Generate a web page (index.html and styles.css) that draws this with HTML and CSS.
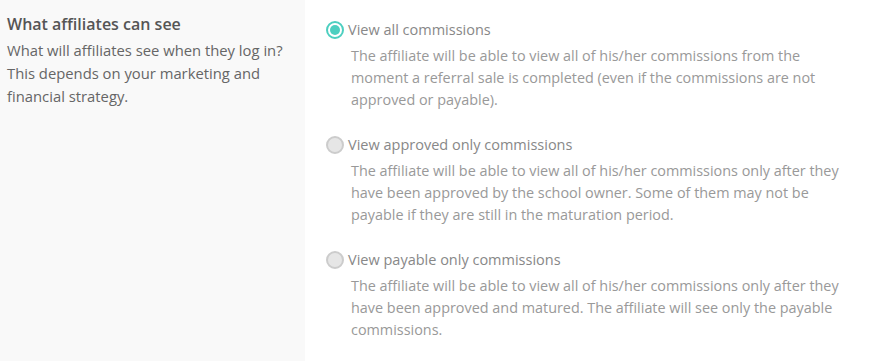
FILE: index.html
```html
<!DOCTYPE html>
<html>
<head>
<meta charset="utf-8">
<link rel="stylesheet" href="styles.css">
</head>
<body>
<div class="page">
  <aside class="side">
    <h2 class="side-title">What affiliates can see</h2>
    <p class="side-desc">What will affiliates see when they log in? This depends on your marketing and financial strategy.</p>
  </aside>
  <main class="options">
    <label class="option">
      <span class="radio checked"></span>
      <span class="option-body">
        <span class="option-label">View all commissions</span>
        <span class="option-desc">The affiliate will be able to view all of his/her commissions from the moment a referral sale is completed (even if the commissions are not approved or payable).</span>
      </span>
    </label>
    <label class="option">
      <span class="radio"></span>
      <span class="option-body">
        <span class="option-label">View approved only commissions</span>
        <span class="option-desc">The affiliate will be able to view all of his/her commissions only after they have been approved by the school owner. Some of them may not be payable if they are still in the maturation period.</span>
      </span>
    </label>
    <label class="option">
      <span class="radio"></span>
      <span class="option-body">
        <span class="option-label">View payable only commissions</span>
        <span class="option-desc">The affiliate will be able to view all of his/her commissions only after they have been approved and matured. The affiliate will see only the payable commissions.</span>
      </span>
    </label>
  </main>
</div>
</body>
</html>
```

FILE: styles.css
```css
html, body {
  margin: 0;
  padding: 0;
  background: #ffffff;
}
body {
  font-family: "Open Sans", "Noto Sans", sans-serif;
  -webkit-font-smoothing: antialiased;
}
.page {
  display: flex;
  width: 875px;
  height: 361px;
  overflow: hidden;
}
.side {
  width: 305px;
  flex: none;
  background: #f9f9f9;
  box-sizing: border-box;
  padding: 12px 7px 0 7px;
}
.side-title {
  margin: 0;
  font-size: 16px;
  font-weight: 600;
  color: #555555;
  line-height: 24px;
}
.side-desc {
  margin: 3px 0 0 0;
  font-size: 14.8px;
  color: #666666;
  line-height: 23px;
  width: 290px;
}
.options {
  flex: 1;
  padding: 19px 0 0 21px;
  display: flex;
  flex-direction: column;
  gap: 23px;
}
.option {
  display: flex;
  align-items: flex-start;
  gap: 4px;
}
.radio {
  flex: none;
  width: 18px;
  height: 18px;
  box-sizing: border-box;
  border-radius: 50%;
  border: 2px solid #cccccc;
  background: #e6e6e6;
  margin-top: 2px;
  position: relative;
}
.radio.checked {
  border-color: #4dcfc0;
  background: #ffffff;
}
.radio.checked::after {
  content: "";
  position: absolute;
  left: 2px;
  top: 2px;
  width: 10px;
  height: 10px;
  border-radius: 50%;
  background: #4dcfc0;
}
.option-body {
  display: flex;
  flex-direction: column;
  width: 502px;
}
.option-label {
  font-size: 14.5px;
  color: #888888;
  line-height: 22px;
}
.option-desc {
  font-size: 14.4px;
  color: #999999;
  line-height: 22px;
  margin-top: 4px;
  padding-left: 3px;
}
```
